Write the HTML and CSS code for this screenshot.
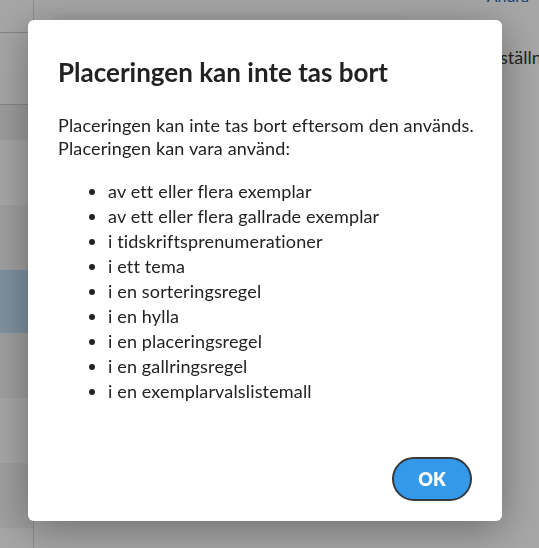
FILE: index.html
```html
<!DOCTYPE html>
<html lang="sv">
<head>
<meta charset="utf-8">
<link rel="stylesheet" href="styles.css">
</head>
<body>
<div class="app">
  <aside class="sidebar">
    <div class="side-top"></div>
    <div class="side-gap"></div>
    <div class="row head"></div>
    <div class="row"></div>
    <div class="row alt"></div>
    <div class="row sel"></div>
    <div class="row alt"></div>
    <div class="row"></div>
    <div class="row alt"></div>
    <div class="row"></div>
  </aside>
  <main class="main">
    <div class="topbar"><span class="toplink">Ändra</span></div>
    <div class="panel"></div>
    <div class="settings">Inställningar</div>
  </main>
</div>

<div class="overlay">
  <div class="modal" role="dialog">
    <h2 class="title">Placeringen kan inte tas bort</h2>
    <p class="text">Placeringen kan inte tas bort eftersom den används.<br>Placeringen kan vara använd:</p>
    <ul class="list">
      <li>av ett eller flera exemplar</li>
      <li>av ett eller flera gallrade exemplar</li>
      <li>i tidskriftsprenumerationer</li>
      <li>i ett tema</li>
      <li>i en sorteringsregel</li>
      <li>i en hylla</li>
      <li>i en placeringsregel</li>
      <li>i en gallringsregel</li>
      <li>i en exemplarvalslistemall</li>
    </ul>
    <div class="actions">
      <button class="ok">OK</button>
    </div>
  </div>
</div>
</body>
</html>
```

FILE: styles.css
```css
* { box-sizing: border-box; }
html, body { margin: 0; height: 100%; }
body {
  font-family: Lato, "Open Sans", sans-serif;
  color: #222;
  background: #fff;
  overflow: hidden;
}
.app {
  display: flex;
  height: 548px;
}
.sidebar {
  width: 34px;
  flex-shrink: 0;
  border-right: 1px solid #d8d8d8;
  display: flex;
  flex-direction: column;
  overflow: hidden;
}
.sidebar > div { flex-shrink: 0; }
.side-top { height: 33px; border-bottom: 1px solid #ccc; }
.side-gap { height: 72px; border-bottom: 1px solid #ccc; }
.row { height: 65px; }
.row.head { height: 35px; background: #f0f0f0; }
.row.alt { background: #f4f4f4; }
.row.sel { background: #c2dff5; height: 63px; }
.main {
  flex: 1;
  position: relative;
  padding: 14px 0 0 18px;
}
.topbar { height: 0; }
.toplink {
  position: absolute;
  right: 10px;
  top: -14px;
  color: #1d64b3;
  font-size: 16px;
}
.panel {
  width: 358px;
  height: 40px;
  background: #fafafa;
  border-radius: 8px;
}
.settings {
  position: absolute;
  left: 451px;
  top: 46px;
  font-size: 18px;
  color: #333;
  white-space: nowrap;
}
.overlay {
  position: fixed;
  inset: 0;
  background: rgba(0, 0, 0, 0.35);
  padding: 20px 0 0 28px;
}
.modal {
  width: 474px;
  height: 501px;
  background: #fff;
  border-radius: 6px;
  box-shadow: 0 8px 40px rgba(0, 0, 0, 0.35);
  padding: 30px 20px 20px 30px;
  display: flex;
  flex-direction: column;
}
.title {
  margin: 0;
  font-size: 26px;
  font-weight: 700;
  line-height: 44px;
  color: #222;
}
.text {
  margin: 20px 0 0;
  font-size: 18px;
  line-height: 23px;
  letter-spacing: 0.15px;
}
.list {
  margin: 19px 0 0;
  padding-left: 50px;
  font-size: 18px;
  line-height: 25px;
  letter-spacing: 0.15px;
}
.actions {
  margin-top: auto;
  margin-right: 10px;
  display: flex;
  justify-content: flex-end;
}
.ok {
  width: 80px;
  height: 44px;
  border-radius: 22px;
  border: 2px solid #353a40;
  background: #3399e8;
  color: #fff;
  font-family: Lato, sans-serif;
  font-weight: 800;
  font-size: 18px;
}
```
